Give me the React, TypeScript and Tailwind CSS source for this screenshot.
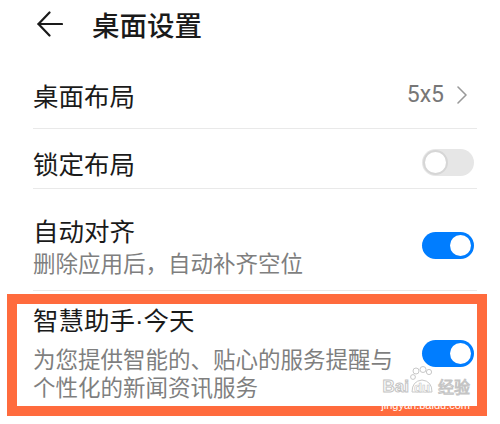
import React from "react";

const font = { fontFamily: '"Noto Sans CJK SC", "Noto Sans", sans-serif' };

function Toggle({ on }: { on: boolean }) {
  return on ? (
    <div className="flex h-[27px] w-[52px] shrink-0 items-center justify-end rounded-full bg-[#007dff] px-[3px]">
      <div className="h-[21px] w-[21px] rounded-full bg-white" />
    </div>
  ) : (
    <div className="flex h-[27px] w-[52px] shrink-0 items-center rounded-full bg-[#e6e6e6] px-[1px]">
      <div className="h-[25px] w-[25px] rounded-full border-2 border-[#d6d6d6] bg-white" />
    </div>
  );
}

function BaiduMark() {
  return (
    <div className="pointer-events-none absolute bottom-[13px] right-[30px] flex flex-col items-end">
      <div className="flex items-end text-[17px] font-bold leading-[17px] text-white/80 [-webkit-text-stroke:1px_#c4c4c4]" style={{ fontFamily: '"Liberation Sans", sans-serif' }}>
        <span>Bai</span>
        <svg width="26" height="30" viewBox="0 0 26 30" className="-mb-[1px]">
          <g fill="rgba(255,255,255,0.8)" stroke="#c8c8c8" strokeWidth="1">
            <circle cx="7" cy="5" r="3" />
            <circle cx="14" cy="3.5" r="3" />
            <circle cx="20" cy="6" r="2.6" />
            <circle cx="4" cy="11" r="2.4" />
            <path d="M3 26 Q3 15 13 14 Q23 15 23 26 Z" />
          </g>
          <text x="13" y="26" textAnchor="middle" fontSize="13" fontWeight="bold" fill="#fff" stroke="#c4c4c4" strokeWidth="0.6" fontFamily="Liberation Sans, sans-serif">du</text>
        </svg>
        <span className="ml-[3px] text-[16px] font-normal" style={font}>经验</span>
      </div>
      <div className="mt-[5px] text-[11px] leading-[11px] text-white" style={{ fontFamily: '"Liberation Sans", sans-serif' }}>
        jingyan.baidu.com
      </div>
    </div>
  );
}

export default function App() {
  return (
    <div className="relative h-[424px] w-[500px] overflow-hidden bg-white" style={font}>
      <div className="flex h-[47px] items-center pl-[37px]">
        <svg width="26" height="26" viewBox="0 0 26 26" fill="none" stroke="#1a1a1a" strokeWidth="2.2" strokeLinecap="round" strokeLinejoin="round">
          <path d="M25 13H1.5" />
          <path d="M12.5 1.5 1.5 13l11 11.5" />
        </svg>
        <h1 className="ml-[29px] text-[27.5px] font-medium leading-[28px] text-[#1a1a1a]">桌面设置</h1>
      </div>

      <div className="ml-[33px] mr-[23px]">
        <div className="flex items-center justify-between border-b border-[#e9e9e9] pb-[21px] pt-[35px]">
          <span className="text-[25.5px] leading-[25px] text-[#1a1a1a]">桌面布局</span>
          <div className="flex items-center text-[#777]">
            <span className="text-[23px] leading-[23px]" style={{ fontFamily: '"Roboto", sans-serif' }}>5x5</span>
            <svg width="12" height="20" viewBox="0 0 12 20" fill="none" stroke="#999" strokeWidth="1.6" strokeLinecap="round" strokeLinejoin="round" className="ml-[12px] mr-[9px]">
              <path d="M2 2l8 8-8 8" />
            </svg>
          </div>
        </div>

        <div className="flex items-center justify-between border-b border-[#e9e9e9] pb-[12px] pt-[20px]">
          <span className="text-[25.5px] leading-[25px] text-[#1a1a1a]">锁定布局</span>
          <div className="mr-[3px]">
            <Toggle on={false} />
          </div>
        </div>

        <div className="flex items-center justify-between border-b border-[#e9e9e9] pb-[16px] pt-[28px]">
          <div className="flex flex-col">
            <span className="text-[25.5px] leading-[25px] text-[#1a1a1a]">自动对齐</span>
            <span className="mt-[9px] text-[22.5px] leading-[23px] text-[#7f7f7f]">删除应用后，自动补齐空位</span>
          </div>
          <div className="mr-[3px]">
            <Toggle on />
          </div>
        </div>
      </div>

      <div className="ml-[7px] mr-[13px] mt-[3px] border-[10px] border-[#ff6b3d] pb-[6px] pl-[16px] pr-[3px] pt-[2px]">
        <div className="flex items-center justify-between">
          <div className="flex w-[370px] flex-col">
            <span className="text-[25.5px] leading-[25px] text-[#1a1a1a]">
              智慧助手<span style={{ fontFamily: '"Liberation Sans", sans-serif' }}>·</span>今天
            </span>
            <span className="mt-[10px] text-[22.5px] leading-[28px] text-[#7f7f7f]">为您提供智能的、贴心的服务提醒与个性化的新闻资讯服务</span>
          </div>
          <Toggle on />
        </div>
      </div>

      <BaiduMark />
    </div>
  );
}
